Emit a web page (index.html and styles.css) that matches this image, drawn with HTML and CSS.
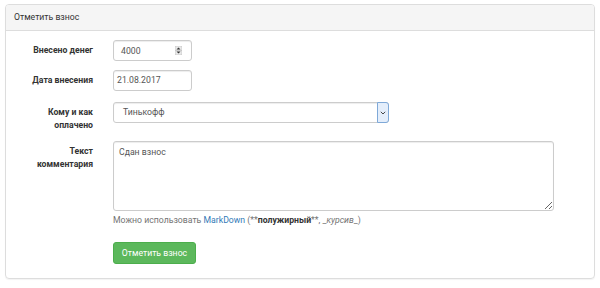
FILE: index.html
```html
<!DOCTYPE html>
<html lang="ru">
<head>
  <meta charset="UTF-8">
  <title>Отметить взнос</title>
  <link rel="stylesheet" href="styles.css">
</head>
<body>
  <div class="panel">
    <div class="panel-heading">Отметить взнос</div>
    <form class="panel-body">
      <div class="form-group">
        <label class="control-label">Внесено денег</label>
        <div class="control">
          <div class="form-control number-input">
            <span>4000</span>
            <span class="spinner">
              <svg width="7" height="9" viewBox="0 0 7 9"><rect x="0" y="0" width="7" height="9" fill="#e8e8e8" stroke="#bbb" stroke-width="0.6"/><path d="M1.5 3.5 L3.5 1.5 L5.5 3.5 Z M1.5 5.5 L3.5 7.5 L5.5 5.5 Z" fill="#333"/><line x1="0" y1="4.5" x2="7" y2="4.5" stroke="#bbb" stroke-width="0.6"/></svg>
            </span>
          </div>
        </div>
      </div>
      <div class="form-group">
        <label class="control-label">Дата внесения</label>
        <div class="control">
          <div class="form-control date-input">21.08.2017</div>
        </div>
      </div>
      <div class="form-group">
        <label class="control-label">Кому и как<br>оплачено</label>
        <div class="control">
          <div class="form-control select-input">
            <span class="select-value">Тинькофф</span>
            <span class="select-arrow">
              <svg width="6" height="4" viewBox="0 0 6 4"><path d="M0.8 0.8 L3 3 L5.2 0.8" fill="none" stroke="#333" stroke-width="0.9"/></svg>
            </span>
          </div>
        </div>
      </div>
      <div class="form-group">
        <label class="control-label">Текст<br>комментария</label>
        <div class="control">
          <textarea class="form-control comment">Сдан взнос</textarea>
          <p class="help-block">Можно использовать <a href="#">MarkDown</a> (**<b>полужирный</b>**, _<i>курсив</i>_)</p>
        </div>
      </div>
      <div class="form-group buttons">
        <div class="control-label"></div>
        <div class="control">
          <button type="button" class="btn-success">Отметить взнос</button>
        </div>
      </div>
    </form>
  </div>
</body>
</html>
```

FILE: styles.css
```css
body {
  margin: 0;
  padding: 4px 5px;
  font-family: Roboto, "Liberation Sans", sans-serif;
  font-size: 8.7px;
  color: #333;
  background: #fff;
}
.panel {
  border: 1px solid #ddd;
  border-radius: 4px;
  height: 275px;
  box-sizing: border-box;
  box-shadow: 0 1px 1px rgba(0, 0, 0, 0.05);
}
.panel-heading {
  background: #f5f5f5;
  border-bottom: 1px solid #ddd;
  border-radius: 3px 3px 0 0;
  height: 25px;
  line-height: 25px;
  padding: 0 8px;
  color: #333;
}
.panel-body {
  padding: 9px 0 0;
  margin: 0;
}
.form-group {
  display: flex;
  gap: 20px;
  margin-bottom: 9px;
}
.form-group:nth-child(2) {
  margin-bottom: 11px;
}
.control-label {
  width: 87px;
  flex: none;
  text-align: right;
  font-weight: bold;
  line-height: 13px;
  padding-top: 4px;
}
.control {
  flex: 1;
}
.form-control {
  box-sizing: border-box;
  border: 1px solid #ccc;
  border-radius: 3px;
  height: 21px;
  font-family: inherit;
  font-size: 8.7px;
  color: #555;
  background: #fff;
  box-shadow: inset 0 1px 1px rgba(0, 0, 0, 0.075);
}
.number-input {
  width: 79px;
  display: flex;
  align-items: center;
  justify-content: space-between;
  padding: 0 9px 0 7px;
}
.spinner {
  display: flex;
}
.date-input {
  width: 79px;
  line-height: 19px;
  padding: 0 3px;
}
.select-input {
  width: 276px;
  display: flex;
  align-items: stretch;
  padding-left: 9px;
}
.select-value {
  flex: 1;
  line-height: 19px;
}
.select-arrow {
  width: 10px;
  margin: -1px -1px -1px 0;
  background: #e4eefb;
  border: 1px solid #7fa9d8;
  border-radius: 0 3px 3px 0;
  display: flex;
  align-items: center;
  justify-content: center;
}
.comment {
  display: block;
  width: 441px;
  height: 70px;
  padding: 4px 5px;
  line-height: 13px;
  resize: vertical;
  margin: 0;
}
.help-block {
  margin: 3px 0 0;
  line-height: 13px;
  color: #737373;
}
.help-block a {
  color: #337ab7;
  text-decoration: none;
}
.help-block b {
  color: #333;
}
.buttons {
  margin-top: 15px;
}
.btn-success {
  background: #5cb85c;
  border: 1px solid #4cae4c;
  border-radius: 3px;
  color: #fff;
  font-family: inherit;
  font-size: 8.7px;
  height: 22px;
  width: 83px;
  padding: 0;
}
```
